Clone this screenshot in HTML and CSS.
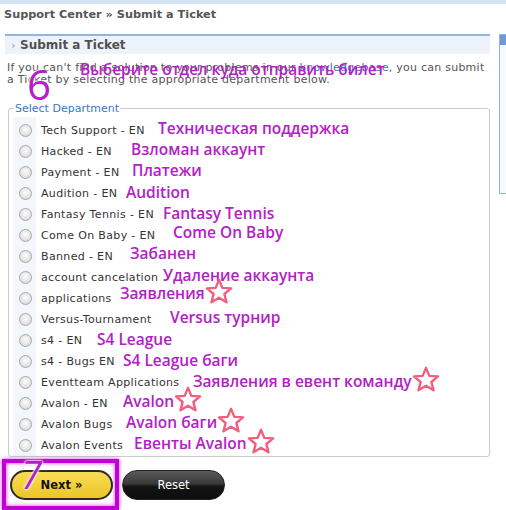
FILE: index.html
```html
<!DOCTYPE html>
<html lang="ru">
<head>
    <meta charset="UTF-8">
    <title>Support Center » Submit a Ticket</title>
    <link rel="stylesheet" href="styles.css">
</head>
<body>
    <div class="topband"></div>
    <div class="crumbs">Support Center » Submit a Ticket</div>

    <div class="layout">
        <div class="main">
            <div class="box-head"><span class="arrow">›</span>Submit a Ticket</div>
            <p class="intro">
                If you can't find a solution to your problems in our <a href="#">knowledgebase</a>, you can submit<br>
                a Ticket by selecting the appropriate department below.
                <span class="big-num num-six">6</span>
                <span class="note intro-note">Выберите отдел куда отправить билет</span>
            </p>

            <fieldset class="dept">
                <legend>Select Department</legend>
                <div class="opts">
                    <label class="opt"><input type="radio" name="dept"><span class="opt-text">Tech Support - EN</span><span class="note" style="left:145px;top:-2px">Техническая поддержка</span></label>
                    <label class="opt"><input type="radio" name="dept"><span class="opt-text">Hacked - EN</span><span class="note" style="left:118px;top:-2px">Взломан аккаунт</span></label>
                    <label class="opt"><input type="radio" name="dept"><span class="opt-text">Payment - EN</span><span class="note" style="left:119px;top:-2px">Платежи</span></label>
                    <label class="opt"><input type="radio" name="dept"><span class="opt-text">Audition - EN</span><span class="note" style="left:113px;top:-1px">Audition</span></label>
                    <label class="opt"><input type="radio" name="dept"><span class="opt-text">Fantasy Tennis - EN</span><span class="note" style="left:150px;top:-1px">Fantasy Tennis</span></label>
                    <label class="opt"><input type="radio" name="dept"><span class="opt-text">Come On Baby - EN</span><span class="note" style="left:160px;top:-3px">Come On Baby</span></label>
                    <label class="opt"><input type="radio" name="dept"><span class="opt-text">Banned - EN</span><span class="note" style="left:117px;top:-3px">Забанен</span></label>
                    <label class="opt"><input type="radio" name="dept"><span class="opt-text">account cancelation</span><span class="note" style="left:150px;top:-2px">Удаление аккаунта</span></label>
                    <label class="opt"><input type="radio" name="dept"><span class="opt-text">applications</span><span class="note" style="left:107px;top:-5px">Заявления<svg class="star" viewBox="0 0 30 28"><polygon points="15,2 18.6,10.6 28,11.2 20.8,17.2 23.1,26.2 15,21.2 6.9,26.2 9.2,17.2 2,11.2 11.4,10.6"/></svg></span></label>
                    <label class="opt"><input type="radio" name="dept"><span class="opt-text">Versus-Tournament</span><span class="note" style="left:157px;top:-2px">Versus турнир</span></label>
                    <label class="opt"><input type="radio" name="dept"><span class="opt-text">s4 - EN</span><span class="note" style="left:84px;top:-1px">S4 League</span></label>
                    <label class="opt"><input type="radio" name="dept"><span class="opt-text">s4 - Bugs EN</span><span class="note" style="left:110px;top:-1px">S4 League баги</span></label>
                    <label class="opt"><input type="radio" name="dept"><span class="opt-text">Eventteam Applications</span><span class="note" style="left:180px;top:-1px">Заявления в евент команду<svg class="star" viewBox="0 0 30 28"><polygon points="15,2 18.6,10.6 28,11.2 20.8,17.2 23.1,26.2 15,21.2 6.9,26.2 9.2,17.2 2,11.2 11.4,10.6"/></svg></span></label>
                    <label class="opt"><input type="radio" name="dept"><span class="opt-text">Avalon - EN</span><span class="note" style="left:110px;top:-2px">Avalon<svg class="star" viewBox="0 0 30 28"><polygon points="15,2 18.6,10.6 28,11.2 20.8,17.2 23.1,26.2 15,21.2 6.9,26.2 9.2,17.2 2,11.2 11.4,10.6"/></svg></span></label>
                    <label class="opt"><input type="radio" name="dept"><span class="opt-text">Avalon Bugs</span><span class="note" style="left:113px;top:-2px">Avalon баги<svg class="star" viewBox="0 0 30 28"><polygon points="15,2 18.6,10.6 28,11.2 20.8,17.2 23.1,26.2 15,21.2 6.9,26.2 9.2,17.2 2,11.2 11.4,10.6"/></svg></span></label>
                    <label class="opt"><input type="radio" name="dept"><span class="opt-text">Avalon Events</span><span class="note" style="left:121px;top:-2px">Евенты Avalon<svg class="star" viewBox="0 0 30 28"><polygon points="15,2 18.6,10.6 28,11.2 20.8,17.2 23.1,26.2 15,21.2 6.9,26.2 9.2,17.2 2,11.2 11.4,10.6"/></svg></span></label>
                </div>
            </fieldset>

            <div class="actions">
                <div class="highlight">
                    <button class="btn btn-next">Next »</button>
                    <span class="big-num num-seven">7</span>
                </div>
                <button class="btn btn-reset">Reset</button>
            </div>
        </div>

        <div class="side">
            <div class="side-head"></div>
        </div>
    </div>
</body>
</html>
```

FILE: styles.css
```css
:root {
    --text: #555555;
    --label: #333333;
    --link: #3a78c0;
    --blue-line: #8fb6e2;
    --head-bg: #eef3fb;
    --note: #b320c6;
    --star: #f0607e;
}

body {
    margin: 0;
    padding: 0;
    width: 506px;
    height: 510px;
    overflow: hidden;
    background: #ffffff;
    font-family: "DejaVu Sans", Verdana, sans-serif;
    color: var(--text);
}

.topband {
    height: 4px;
    background: #d3e3f5;
}

.crumbs {
    padding: 4px 0 0 4px;
    height: 26px;
    font-size: 11.3px;
    font-weight: bold;
    line-height: 14px;
    color: #555;
}

.layout {
    display: flex;
}

.main {
    width: 487px;
    padding-left: 5px;
}

.box-head {
    height: 18px;
    border-top: 2px solid var(--blue-line);
    background: var(--head-bg);
    font-size: 12px;
    font-weight: bold;
    line-height: 19px;
    color: #505050;
}

.arrow {
    display: inline-block;
    width: 15px;
    padding-left: 6px;
    box-sizing: border-box;
    color: #8fb6e2;
    font-size: 11px;
}

.intro {
    position: relative;
    margin: 8px 0 0 2px;
    height: 40px;
    font-size: 11px;
    letter-spacing: 0.25px;
    line-height: 12px;
    color: #555;
    white-space: nowrap;
}

.intro a {
    color: var(--link);
    text-decoration: none;
}

.note {
    position: absolute;
    white-space: nowrap;
    font-family: "Open Sans", "Noto Sans", sans-serif;
    font-size: 15.5px;
    font-weight: 600;
    letter-spacing: 0;
    line-height: 21px;
    color: var(--note);
    display: flex;
    align-items: center;
}

.intro-note {
    left: 73px;
    top: -3px;
}

.big-num {
    position: absolute;
    font-family: "Open Sans", "Noto Sans", sans-serif;
    font-size: 38px;
    line-height: 38px;
    letter-spacing: 0;
    color: var(--note);
    text-shadow: 0 0 2px #fff, 0 0 2px #fff, 0 0 3px #fff;
}

.num-six {
    left: 20px;
    top: 1px;
    font-size: 42px;
    line-height: 42px;
}

.star {
    width: 28px;
    height: 26px;
    margin-top: -6px;
    flex: none;
}

.star polygon {
    fill: none;
    stroke: var(--star);
    stroke-width: 2.6;
    stroke-linejoin: round;
}

.dept {
    margin: 0 0 0 3px;
    padding: 2px 6px 1px 4px;
    width: 482px;
    height: 355px;
    box-sizing: border-box;
    border: 1px solid #cccccc;
    border-radius: 3px;
}

.dept legend {
    padding: 0 1px;
    margin-left: 1px;
    font-size: 11px;
    line-height: 13px;
    color: var(--link);
}

.opts {
    position: relative;
    padding-top: 3px;
    background: linear-gradient(to right, #f3f6fa 0, #f3f6fa 23px, transparent 23px);
}

.opt {
    position: relative;
    display: flex;
    align-items: center;
    height: 21px;
    font-size: 11px;
    letter-spacing: 0.35px;
    color: var(--label);
}

.opt input {
    appearance: none;
    -webkit-appearance: none;
    margin: 0 9px 0 6px;
    width: 13px;
    height: 13px;
    border-radius: 50%;
    border: 1px solid #a8a8a8;
    background: radial-gradient(circle at 50% 40%, #fbfbfb 0, #e6e6e6 55%, #cfcfcf 100%);
    box-sizing: border-box;
}

.actions {
    display: flex;
    align-items: flex-start;
    gap: 3px;
    margin-top: 2px;
    margin-left: -3px;
}

.highlight {
    position: relative;
    padding: 7px 2px 6px 4px;
    border: 4px solid #c000d6;
    box-shadow: 0 0 4px #d040e0, inset 0 0 4px #d040e0;
}

.btn {
    width: 103px;
    height: 30px;
    border-radius: 15px;
    font-family: "DejaVu Sans", Verdana, sans-serif;
    font-size: 11.5px;
    cursor: pointer;
}

.btn-next {
    display: block;
    border: 2px solid #2b2b2b;
    background: linear-gradient(#f8dc52, #ecc62a);
    color: #111;
    font-weight: bold;
}

.btn-reset {
    margin-top: 11px;
    border: 1px solid #222;
    background: linear-gradient(#5a5a5a 0, #3a3a3a 45%, #151515 55%, #0c0c0c 100%);
    color: #ffffff;
}

.num-seven {
    left: 15px;
    top: -8px;
    font-style: italic;
}

.side {
    width: 14px;
    margin-left: 0;
    padding-left: 9px;
}

.side-head {
    height: 158px;
    border: 1px solid #8fb6e2;
    border-right: none;
    background: linear-gradient(#6e9bd6 0, #6e9bd6 10px, #f6f9fd 10px);
}
```
